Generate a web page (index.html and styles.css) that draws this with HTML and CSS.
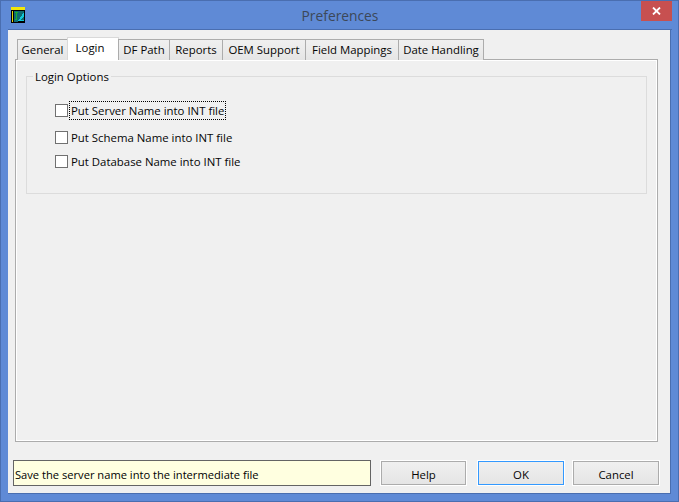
FILE: index.html
```html
<!DOCTYPE html>
<html lang="en">
<head>
<meta charset="utf-8">
<title>Preferences</title>
<link rel="stylesheet" href="styles.css">
</head>
<body>
<div class="window">
  <div class="titlebar">
    <div class="title-left">
      <svg class="app-icon" width="15" height="16" viewBox="0 0 15 16" shape-rendering="crispEdges">
        <rect x="0" y="0" width="14" height="3" fill="#f2e60a"/>
        <rect x="0" y="3" width="14" height="13" fill="#000"/>
        <rect x="1" y="4" width="1" height="11" fill="#e8d80a"/>
        <rect x="3" y="4" width="10" height="11" fill="#0e6a70"/>
        <path d="M4 5h3M5 5v7M4 12h2" stroke="#19b030" stroke-width="1" fill="none"/>
        <path d="M7 14 13 5v9z" fill="#10c8d8"/>
        <path d="M10 13 12.500 9.500v3.500z" fill="#0e6a70"/>
        <rect x="7" y="14" width="7" height="1" fill="#000"/>
      </svg>
    </div>
    <div class="title">Preferences</div>
    <div class="title-right">
      <div class="close">
        <svg width="9" height="8" viewBox="0 0 9 8"><path d="M1 .5l7 7M8 .5l-7 7" stroke="#fff" stroke-width="1.800"/></svg>
      </div>
    </div>
  </div>
  <div class="dialog">
    <div class="tabs">
      <div class="tab tab-general">General</div>
      <div class="tab tab-active">Login</div>
      <div class="tab tab-df">DF Path</div>
      <div class="tab tab-reports">Reports</div>
      <div class="tab tab-oem">OEM Support</div>
      <div class="tab tab-field">Field Mappings</div>
      <div class="tab tab-date">Date Handling</div>
    </div>
    <div class="pane">
      <div class="group">
        <div class="legend">Login Options</div>
        <div class="check check-first"><span class="box"></span><span class="label label-focus">Put Server Name into INT file</span></div>
        <div class="check check-second"><span class="box"></span><span class="label">Put Schema Name into INT file</span></div>
        <div class="check check-third"><span class="box"></span><span class="label">Put Database Name into INT file</span></div>
      </div>
    </div>
    <div class="footer">
      <div class="status">Save the server name into the intermediate file</div>
      <div class="btn btn-help">Help</div>
      <div class="btn btn-ok">OK</div>
      <div class="btn btn-cancel">Cancel</div>
    </div>
  </div>
</div>
</body>
</html>
```
FILE: styles.css
```css
* { box-sizing: border-box; }
html, body { margin: 0; padding: 0; }
body { width: 679px; height: 502px; overflow: hidden; font-family: "Open Sans", "Liberation Sans", sans-serif; font-size: 11.4px; color: #050505; }
.window { width: 679px; height: 502px; background: #5f8ad6; border: 1px solid #4a6eb0; display: flex; flex-direction: column; }
.titlebar { height: 29px; display: grid; grid-template-columns: 1fr auto 1fr; flex: none; border-bottom: 1px solid #4a6eb0; margin-left: 7px; margin-right: 6px; }
.title-left { padding: 6px 0 0 3px; }
.app-icon { display: block; }
.title { font-size: 13.8px; line-height: 30px; color: #3c4858; }
.title-right { display: flex; justify-content: flex-end; align-items: flex-start; }
.close { width: 31px; height: 20px; background: #c75050; display: flex; align-items: center; justify-content: center; }
.dialog { width: 663px; height: 464px; margin-left: 7px; background: #f0f0f0; border-right: 1px solid #4a6eb0; border-bottom: 1px solid #4a6eb0; padding: 7px 0 0 7px; display: flex; flex-direction: column; }
.tabs { display: flex; height: 23px; padding: 2px 0 0 2px; align-items: flex-start; position: relative; z-index: 1; }
.tab { height: 21px; line-height: 20px; border: 1px solid #acacac; border-bottom: none; background: linear-gradient(#f0f0f0, #e5e5e5); text-align: center; margin-right: -1px; white-space: nowrap; }
.tab-general { width: 51px; }
.tab-active { width: 52px; height: 23px; margin-top: -2px; background: #fff; border-color: #d9d9d9; line-height: 20px; padding-right: 6px; }
.tab-df { width: 52px; }
.tab-reports { width: 54px; }
.tab-oem { width: 84px; }
.tab-field { width: 94px; }
.tab-date { width: 86px; }
.pane { width: 643px; height: 383px; border: 1px solid #acacac; box-shadow: inset 1px 1px 0 #fff, inset -1px -1px 0 #fff; margin-top: -1px; padding: 16px 10px 0; }
.group { position: relative; width: 621px; height: 118px; border: 1px solid #dcdcdc; }
.legend { position: absolute; left: 6px; top: -7px; padding: 0 2px; background: #f0f0f0; line-height: 14px; }
.check { display: flex; align-items: center; height: 16px; padding-left: 28px; }
.check-first { margin-top: 25px; }
.check-second { margin-top: 11px; }
.check-third { margin-top: 8px; }
.box { width: 13px; height: 13px; background: #fff; border: 1px solid #707070; flex: none; }
.label { margin-left: 3px; white-space: nowrap; }
.label-focus { outline: 1px dotted #000; outline-offset: 1px; }
.footer { display: flex; align-items: center; margin-top: 18px; margin-left: -2px; }
.status { width: 358px; height: 26px; line-height: 27px; border: 1px solid #646464; background: #ffffe0; padding-left: 1px; color: #000; font-size: 11.15px; }
.btn { height: 24px; line-height: 25px; text-align: center; border: 1px solid #acacac; background: linear-gradient(#f0f0f0, #e5e5e5); outline: 1px solid #fff; }
.btn-help { width: 85px; margin-left: 10px; }
.btn-ok { width: 86px; margin-left: 12px; border-color: #3399ff; }
.btn-cancel { width: 86px; margin-left: 9px; }
```
